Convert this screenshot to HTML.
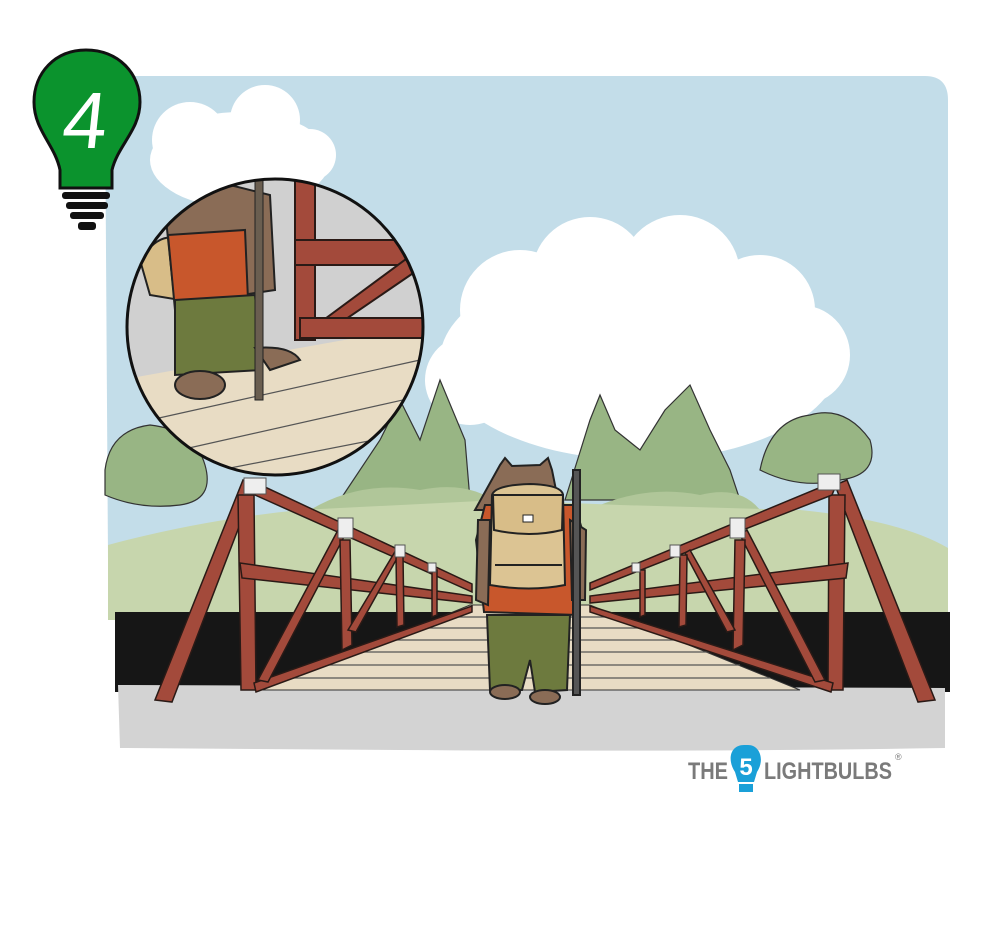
<!DOCTYPE html>
<html><head><meta charset="utf-8"><style>
html,body{margin:0;padding:0;background:#fff;width:1000px;height:948px;overflow:hidden}
svg{display:block}
</style></head><body>
<svg width="1000" height="948" viewBox="0 0 1000 948" xmlns="http://www.w3.org/2000/svg">
<defs>
<clipPath id="cc"><circle cx="275" cy="327" r="148"/></clipPath>
</defs>
<path d="M120 76 Q105 76 105 96 L108 560 L948 560 L948 100 Q948 76 925 76 Z" fill="#c3dde9"/>
<g fill="#fff">
<ellipse cx="640" cy="360" rx="200" ry="100"/>
<circle cx="520" cy="310" r="60"/><circle cx="590" cy="275" r="58"/><circle cx="680" cy="275" r="60"/>
<circle cx="760" cy="310" r="55"/><circle cx="800" cy="355" r="50"/><circle cx="470" cy="380" r="45"/>
<ellipse cx="240" cy="160" rx="90" ry="48"/><circle cx="190" cy="140" r="38"/><circle cx="265" cy="120" r="35"/><circle cx="310" cy="155" r="26"/>
</g>
<g fill="#98b584" stroke="#333" stroke-width="1.2">
<path d="M340 500 L380 440 L400 400 L420 440 L440 380 L465 440 L470 500 Z"/>
<path d="M565 500 L590 420 L600 395 L615 430 L640 450 L665 410 L690 385 L710 430 L730 470 L740 500 Z"/>
<path d="M760 470 Q770 420 810 415 Q845 405 870 440 Q880 475 840 480 Q800 490 760 470 Z"/>
<path d="M105 470 Q110 430 150 425 Q195 430 205 465 Q215 500 180 505 Q140 510 105 495 Z"/>
</g>
<path d="M310 510 Q360 480 420 490 Q470 480 500 505 L600 505 Q650 485 700 495 Q740 485 760 510 Z" fill="#b0c699"/>
<path d="M108 545 Q200 520 300 510 L500 500 L620 505 L800 510 Q900 520 948 548 L948 620 L108 620 Z" fill="#c7d6ad"/>
<rect x="115" y="612" width="835" height="80" fill="#161616"/>
<path d="M118 685 L945 688 L945 748 Q700 752 400 750 L120 748 Z" fill="#d3d3d3"/>
<path d="M262 690 L470 605 L590 605 L800 690 Z" fill="#e8dcc4" stroke="#333" stroke-width="1"/>
<g stroke="#555" stroke-width="1.3">
<line x1="290" y1="678" x2="770" y2="678"/><line x1="320" y1="665" x2="740" y2="665"/>
<line x1="350" y1="652" x2="710" y2="652"/><line x1="380" y1="640" x2="680" y2="640"/>
<line x1="410" y1="628" x2="650" y2="628"/><line x1="440" y1="617" x2="620" y2="617"/>
</g>
<g fill="#a34a3b" stroke="#2a1a16" stroke-width="1.5">
<polygon points="155,700 172,702 255,485 243,480"/>
<polygon points="238,495 254,495 256,690 241,690"/>
<polygon points="250,480 255,495 472,592 472,584"/>
<polygon points="240,563 242,578 472,603 472,596"/>
<polygon points="254,683 256,692 472,612 472,606"/>
<polygon points="258,680 268,682 345,535 338,530"/>
<polygon points="340,540 350,540 352,645 342,650"/>
<polygon points="348,630 356,632 400,553 396,550"/>
<polygon points="396,555 403,555 404,625 397,627"/>
<polygon points="432,570 437,570 437,615 432,617"/>
</g>
<g fill="#eee" stroke="#555" stroke-width="1"><rect x="244" y="478" width="22" height="16"/><rect x="338" y="518" width="15" height="20"/><rect x="395" y="545" width="10" height="12"/><rect x="428" y="563" width="8" height="9"/></g>
<g fill="#a34a3b" stroke="#2a1a16" stroke-width="1.5">
<polygon points="935,700 918,702 835,485 847,480"/>
<polygon points="829,495 845,495 843,690 828,690"/>
<polygon points="838,480 832,495 590,590 590,583"/>
<polygon points="848,563 846,578 590,603 590,596"/>
<polygon points="833,683 831,692 590,612 590,606"/>
<polygon points="825,680 815,682 740,535 747,530"/>
<polygon points="735,540 745,540 743,645 733,650"/>
<polygon points="735,630 727,632 685,553 690,550"/>
<polygon points="680,555 687,555 686,625 679,627"/>
<polygon points="640,570 645,570 645,615 640,617"/>
</g>
<g fill="#eee" stroke="#555" stroke-width="1"><rect x="818" y="474" width="22" height="16"/><rect x="730" y="518" width="15" height="20"/><rect x="670" y="545" width="10" height="12"/><rect x="632" y="563" width="8" height="9"/></g>
<g stroke="#222" stroke-width="2">
<path d="M500 465 L505 458 L512 466 L540 465 L548 458 L552 470 L560 510 L475 510 Z" fill="#8a6c56"/>
<path d="M485 505 L575 505 L585 540 L578 615 L484 612 L476 540 Z" fill="#c8572c"/>
<path d="M478 520 L490 520 L488 605 L476 600 Z" fill="#8a6c56"/>
<path d="M570 520 L586 530 L585 600 L572 600 Z" fill="#8a6c56"/>
<path d="M487 615 L570 615 L567 690 L535 692 L530 660 L522 690 L490 690 Z" fill="#6d7a3e"/>
<ellipse cx="505" cy="692" rx="15" ry="7" fill="#8a6c56"/><ellipse cx="545" cy="697" rx="15" ry="7" fill="#8a6c56"/>
<path d="M492 495 Q495 485 530 484 Q562 485 563 495 L565 585 Q530 592 490 585 Z" fill="#dcc493"/>
<path d="M493 495 L563 495 L562 530 Q530 538 494 530 Z" fill="#d8bd88"/>
<rect x="523" y="515" width="10" height="7" fill="#fff" stroke-width="1"/>
<line x1="495" y1="565" x2="562" y2="565"/>
<rect x="573" y="470" width="7" height="225" fill="#555"/>
</g>
<g clip-path="url(#cc)">
<rect x="120" y="170" width="310" height="320" fill="#d0d0d0"/>
<path d="M120 380 L400 330 L430 340 L430 480 L120 480 Z" fill="#e8dcc4"/>
<g stroke="#555" stroke-width="1.2"><line x1="150" y1="420" x2="420" y2="360"/><line x1="180" y1="450" x2="425" y2="395"/><line x1="220" y1="470" x2="425" y2="430"/></g>
<g fill="#a34a3b" stroke="#2a1a16" stroke-width="2">
<rect x="295" y="180" width="20" height="160"/><rect x="295" y="240" width="130" height="25"/>
<polygon points="310,330 330,330 425,265 425,245"/><rect x="300" y="318" width="130" height="20"/>
</g>
<path d="M140 260 Q160 230 180 240 L180 300 L150 295 Z" fill="#d8bd88" stroke="#222" stroke-width="2"/>
<path d="M165 210 Q180 190 230 185 L270 195 L275 290 L175 305 Z" fill="#8a6c56" stroke="#222" stroke-width="2"/>
<path d="M168 235 L245 230 L248 300 L175 310 Z" fill="#c8572c" stroke="#222" stroke-width="2"/>
<path d="M175 300 L255 295 L262 370 L175 375 Z" fill="#6d7a3e" stroke="#222" stroke-width="2"/>
<ellipse cx="200" cy="385" rx="25" ry="14" fill="#8a6c56" stroke="#222" stroke-width="2"/>
<path d="M255 348 Q290 345 300 360 L270 370 Z" fill="#8a6c56" stroke="#222" stroke-width="2"/>
<rect x="255" y="180" width="8" height="220" fill="#6a5e50" stroke="#222"/>
</g>
<circle cx="275" cy="327" r="148" fill="none" stroke="#111" stroke-width="3"/>
<path d="M86 50 C55 50 34 73 34 102 C34 130 55 145 60 170 L60 188 L112 188 L112 170 C118 145 140 130 140 102 C140 73 118 50 86 50 Z" fill="#0b932d" stroke="#111" stroke-width="3"/>
<g fill="#111"><rect x="62" y="192" width="48" height="7" rx="3"/><rect x="66" y="202" width="42" height="7" rx="3"/><rect x="70" y="212" width="34" height="7" rx="3"/><rect x="78" y="222" width="18" height="8" rx="3"/></g>
<text x="86" y="148" text-anchor="middle" font-family="Liberation Sans, sans-serif" font-size="80" fill="#fff" transform="skewX(-6) translate(12 0)">4</text>
<text x="688" y="779" font-family="Liberation Sans, sans-serif" font-weight="bold" font-size="24" fill="#7a7a7a" textLength="40" lengthAdjust="spacingAndGlyphs">THE</text>
<path d="M744 745 C730 745 727 760 735 772 L738 782 L754 782 L757 772 C765 760 760 745 748 745 Z" fill="#1aa0d8"/>
<rect x="739" y="784" width="14" height="8" fill="#1aa0d8"/>
<text x="746" y="775" text-anchor="middle" font-family="Liberation Sans, sans-serif" font-weight="bold" font-size="24" fill="#fff">5</text>
<text x="764" y="779" font-family="Liberation Sans, sans-serif" font-weight="bold" font-size="24" fill="#7a7a7a" textLength="128" lengthAdjust="spacingAndGlyphs">LIGHTBULBS</text>
<text x="895" y="760" font-family="Liberation Sans, sans-serif" font-size="9" fill="#7a7a7a">®</text>
</svg>
</body></html>
